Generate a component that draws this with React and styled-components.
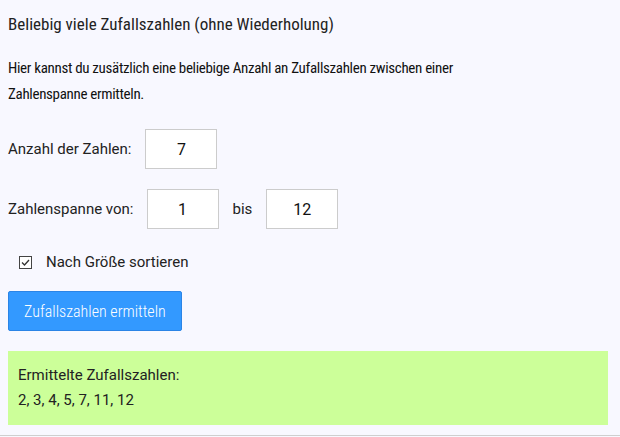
import React from 'react';
import styled, { createGlobalStyle } from 'styled-components';

const GlobalStyle = createGlobalStyle`
  html, body {
    margin: 0;
    padding: 0;
    background: #f8f8ff;
  }
  * { box-sizing: border-box; }
`;

const Page = styled.div`
  width: 620px;
  padding: 11px 12px 10px 8px;
  background: #f8f8ff;
  border-bottom: 1px solid #cfcfcf;
  color: #222;
`;

const Title = styled.h2`
  margin: 0;
  font-family: "Roboto Condensed", Roboto, sans-serif;
  font-stretch: condensed;
  font-weight: 400;
  font-size: 17px;
  line-height: 26px;
  color: #222;
`;

const Intro = styled.p`
  margin: 18px 0 0;
  font-family: "Roboto Condensed", Roboto, sans-serif;
  font-stretch: condensed;
  font-size: 15px;
  letter-spacing: -0.32px;
  line-height: 26px;
  color: #111;
`;

const FieldRow = styled.div`
  display: flex;
  align-items: center;
  margin-top: ${p => p.$top}px;
  font-family: Roboto, sans-serif;
  font-size: 15px;
  color: #222;
`;

const Label = styled.label`
  margin-right: ${p => p.$gap || 14}px;
`;

const NumberBox = styled.input`
  width: 72px;
  height: 40px;
  border: 1px solid #ccc;
  background: #fff;
  text-align: center;
  font-family: Roboto, sans-serif;
  font-size: 16px;
  color: #111;
  outline: none;
  padding: 0;
`;

const Between = styled.span`
  margin: 0 14px;
`;

const CheckRow = styled.label`
  display: flex;
  align-items: center;
  margin-top: 24px;
  padding-left: 11px;
  font-family: Roboto, sans-serif;
  font-size: 15px;
  color: #222;
  gap: 14px;
`;

const CheckBox = styled.span`
  width: 13px;
  height: 13px;
  border: 1px solid #444;
  background: #fff;
  display: inline-flex;
  align-items: center;
  justify-content: center;
`;

const Button = styled.button`
  display: block;
  margin-top: 20px;
  height: 40px;
  padding: 0 15px;
  background: #3399ff;
  border: 1px solid #2b84e6;
  border-radius: 2px;
  color: #fff;
  font-family: "Roboto Condensed", Roboto, sans-serif;
  font-stretch: condensed;
  font-weight: 300;
  font-size: 16px;
  cursor: pointer;
`;

const Result = styled.div`
  margin-top: 20px;
  background: #ccff99;
  padding: 12px 10px;
  font-family: Roboto, sans-serif;
  font-size: 15px;
  line-height: 25px;
  color: #222;
`;

export default function App() {
  return (
    <>
      <GlobalStyle />
      <Page>
        <Title>Beliebig viele Zufallszahlen (ohne Wiederholung)</Title>
        <Intro>
          Hier kannst du zusätzlich eine beliebige Anzahl an Zufallszahlen zwischen einer
          <br />
          Zahlenspanne ermitteln.
        </Intro>
        <FieldRow $top={22}>
          <Label>Anzahl der Zahlen:</Label>
          <NumberBox defaultValue="7" />
        </FieldRow>
        <FieldRow $top={20}>
          <Label $gap={13}>Zahlenspanne von:</Label>
          <NumberBox defaultValue="1" />
          <Between>bis</Between>
          <NumberBox defaultValue="12" />
        </FieldRow>
        <CheckRow>
          <CheckBox>
            <svg width="11" height="11" viewBox="0 0 11 11">
              <path d="M2 5.5 L4.5 8 L9 3" fill="none" stroke="#333" strokeWidth="1.3" />
            </svg>
          </CheckBox>
          Nach Größe sortieren
        </CheckRow>
        <Button>Zufallszahlen ermitteln</Button>
        <Result>
          Ermittelte Zufallszahlen:
          <br />
          2, 3, 4, 5, 7, 11, 12
        </Result>
      </Page>
    </>
  );
}
